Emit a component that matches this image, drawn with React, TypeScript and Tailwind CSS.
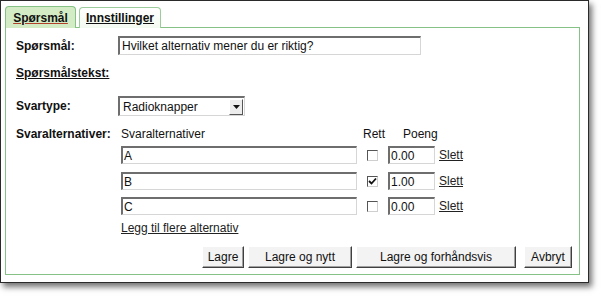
import React from 'react';

const inset =
  'border-t-2 border-l-2 border-r border-b border-t-[#6e6e6e] border-l-[#6e6e6e] border-r-[#d6d6d6] border-b-[#d6d6d6] bg-white';

const Field: React.FC<{ value: string; className?: string }> = ({ value, className }) => (
  <div className={`${inset} flex items-center pl-[1px] text-[12px] leading-none text-[#111] ${className || ''}`}>
    {value}
  </div>
);

const Check: React.FC<{ checked?: boolean }> = ({ checked }) => (
  <div className="w-[11px] h-[11px] border border-t-[#555] border-l-[#555] border-r-[#cfcfcf] border-b-[#cfcfcf] bg-white flex items-center justify-center">
    {checked && (
      <svg width="9" height="9" viewBox="0 0 9 9">
        <path d="M1 4 L3.5 6.5 L8 1.5" stroke="#111" strokeWidth="1.8" fill="none" />
      </svg>
    )}
  </div>
);

const Btn: React.FC<{ label: string; w: string }> = ({ label, w }) => (
  <button
    type="button"
    className={`${w} h-[22px] border border-t-white border-l-white border-r-[#404040] border-b-[#404040] bg-[#f3f3f3] shadow-[inset_-1px_-1px_0_#a0a0a0] text-[12px] text-[#111]`}
  >
    {label}
  </button>
);

type Alt = { text: string; rett: boolean; poeng: string };

export default function App() {
  const alts: Alt[] = [
    { text: 'A', rett: false, poeng: '0.00' },
    { text: 'B', rett: true, poeng: '1.00' },
    { text: 'C', rett: false, poeng: '0.00' },
  ];

  return (
    <div className="w-[604px] h-[297px] bg-white font-['Liberation_Sans',Arial,sans-serif] text-[#111]">
      <div className="w-[589px] h-[283px] border border-[#2a2a2a] bg-white shadow-[3px_4px_6px_rgba(0,0,0,0.55)] pl-[4px] pt-[5px]">
        {/* tabs */}
        <div className="flex gap-[3px] items-end h-[22px] relative z-10">
          <div className="h-[22px] w-[71px] border border-b-0 border-[#86c286] rounded-t-[4px] bg-[#d3ecc5] flex items-center justify-center text-[12px] font-bold underline decoration-[#b0402a]">
            Spørsmål
          </div>
          <div className="h-[21px] w-[82px] border border-b-0 border-[#9ccc9c] rounded-t-[4px] bg-gradient-to-b from-white to-[#f3faf0] flex items-center justify-center text-[12px] font-bold underline">
            Innstillinger
          </div>
        </div>
        {/* panel */}
        <div className="w-[575px] h-[248px] border border-[#86c286] -mt-px pl-[10px] pr-[7px] pt-[8px]">
          <div className="flex items-center h-[19px]">
            <div className="w-[102px] text-[12px] font-bold">Spørsmål:</div>
            <Field value="Hvilket alternativ mener du er riktig?" className="w-[303px] h-[19px] pl-[2px]" />
          </div>

          <div className="mt-[11px] h-[14px] leading-[14px] text-[12px] font-bold underline">Spørsmålstekst:</div>

          <div className="flex items-center h-[20px] mt-[16px]">
            <div className="w-[102px] text-[12px] font-bold">Svartype:</div>
            <div className={`${inset} w-[127px] h-[20px] flex items-center justify-between`}>
              <span className="pl-[3px] text-[12px] leading-none">Radioknapper</span>
              <div className="w-[14px] h-[16px] mr-px bg-[#ececec] border border-t-white border-l-white border-r-[#555] border-b-[#555] flex items-center justify-center">
                <svg width="7" height="4" viewBox="0 0 7 4">
                  <path d="M0 0 H7 L3.5 4 Z" fill="#111" />
                </svg>
              </div>
            </div>
          </div>

          <div className="flex mt-[11px]">
            <div className="w-[102px] h-[14px] leading-[14px] text-[12px] font-bold">Svaralternativer:</div>
            <div className="ml-[3px]">
              <div className="flex h-[14px] leading-[14px] text-[12px]">
                <div className="w-[242px]">Svaralternativer</div>
                <div className="w-[40px]">Rett</div>
                <div>Poeng</div>
              </div>
              {alts.map((a, i) => (
                <div key={a.text} className={`flex items-center h-[18px] ${i === 0 ? 'mt-[5px]' : i === 1 ? 'mt-[8px]' : 'mt-[7px]'}`}>
                  <Field value={a.text} className="w-[236px] h-[18px]" />
                  <div className="ml-[10px]">
                    <Check checked={a.rett} />
                  </div>
                  <Field value={a.poeng} className="ml-[10px] w-[47px] h-[18px]" />
                  <a className="ml-[4px] text-[12px] underline text-[#222] cursor-pointer">Slett</a>
                </div>
              ))}
              <div className="mt-[6px] h-[14px] leading-[14px] text-[12px] underline text-[#222]">
                Legg til flere alternativ
              </div>
            </div>
          </div>

          <div className="flex justify-end gap-[4px] mt-[11px]">
            <Btn label="Lagre" w="w-[42px]" />
            <Btn label="Lagre og nytt" w="w-[104px]" />
            <Btn label="Lagre og forhåndsvis" w="w-[160px]" />
            <Btn label="Avbryt" w="w-[48px] ml-[4px]" />
          </div>
        </div>
      </div>
    </div>
  );
}
